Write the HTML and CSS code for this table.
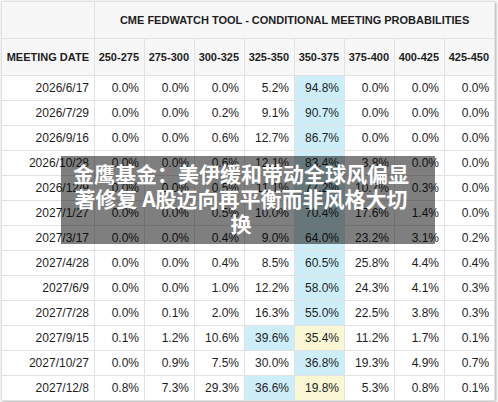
FILE: index.html
```html
<!DOCTYPE html>
<html>
<head>
<meta charset="utf-8">
<link rel="stylesheet" href="styles.css">
</head>
<body>
<div class="frame">
  <table class="fw">
    <colgroup>
      <col class="c-date"><col class="c-num"><col class="c-num"><col class="c-num"><col class="c-num"><col class="c-num"><col class="c-num"><col class="c-num"><col class="c-num">
    </colgroup>
    <thead>
      <tr class="title-row"><th></th><th colspan="8" class="title">CME FEDWATCH TOOL - CONDITIONAL MEETING PROBABILITIES</th></tr>
      <tr class="head-row"><th>MEETING DATE</th><th>250-275</th><th>275-300</th><th>300-325</th><th>325-350</th><th>350-375</th><th>375-400</th><th>400-425</th><th>425-450</th></tr>
    </thead>
    <tbody>
      <tr><td>2026/6/17</td><td>0.0%</td><td>0.0%</td><td>0.0%</td><td>5.2%</td><td class="b">94.8%</td><td>0.0%</td><td>0.0%</td><td>0.0%</td></tr>
      <tr><td>2026/7/29</td><td>0.0%</td><td>0.0%</td><td>0.2%</td><td>9.1%</td><td class="b">90.7%</td><td>0.0%</td><td>0.0%</td><td>0.0%</td></tr>
      <tr><td>2026/9/16</td><td>0.0%</td><td>0.0%</td><td>0.6%</td><td>12.7%</td><td class="b">86.7%</td><td>0.0%</td><td>0.0%</td><td>0.0%</td></tr>
      <tr><td>2026/10/28</td><td>0.0%</td><td>0.0%</td><td>0.6%</td><td>12.1%</td><td class="b">83.4%</td><td>3.8%</td><td>0.0%</td><td>0.0%</td></tr>
      <tr><td>2026/12/9</td><td>0.0%</td><td>0.0%</td><td>0.5%</td><td>11.1%</td><td class="b">77.2%</td><td>10.7%</td><td>0.3%</td><td>0.0%</td></tr>
      <tr><td>2027/1/27</td><td>0.0%</td><td>0.0%</td><td>0.5%</td><td>10.0%</td><td class="b">70.4%</td><td>17.6%</td><td>1.4%</td><td>0.0%</td></tr>
      <tr><td>2027/3/17</td><td>0.0%</td><td>0.0%</td><td>0.4%</td><td>9.0%</td><td class="b">64.0%</td><td>23.2%</td><td>3.1%</td><td>0.2%</td></tr>
      <tr><td>2027/4/28</td><td>0.0%</td><td>0.0%</td><td>0.4%</td><td>8.5%</td><td class="b">60.5%</td><td>25.8%</td><td>4.4%</td><td>0.4%</td></tr>
      <tr><td>2027/6/9</td><td>0.0%</td><td>0.0%</td><td>1.0%</td><td>12.2%</td><td class="b">58.0%</td><td>24.3%</td><td>4.1%</td><td>0.3%</td></tr>
      <tr><td>2027/7/28</td><td>0.0%</td><td>0.1%</td><td>2.0%</td><td>16.3%</td><td class="b">55.0%</td><td>22.5%</td><td>3.8%</td><td>0.3%</td></tr>
      <tr><td>2027/9/15</td><td>0.1%</td><td>1.2%</td><td>10.6%</td><td class="b">39.6%</td><td class="y">35.4%</td><td>11.2%</td><td>1.7%</td><td>0.1%</td></tr>
      <tr><td>2027/10/27</td><td>0.0%</td><td>0.9%</td><td>7.5%</td><td>30.0%</td><td class="b">36.8%</td><td>19.3%</td><td>4.9%</td><td>0.7%</td></tr>
      <tr><td>2027/12/8</td><td>0.8%</td><td>7.3%</td><td>29.3%</td><td class="b">36.6%</td><td class="y">19.8%</td><td>5.3%</td><td>0.8%</td><td>0.1%</td></tr>
    </tbody>
  </table>
  <div class="caption">金鹰基金：美伊缓和带动全球风偏显著修复 A股迈向再平衡而非风格大切换</div>
</div>
</body>
</html>
```

FILE: styles.css
```css
html, body {
  margin: 0;
  padding: 0;
  background: #ffffff;
}
body {
  width: 498px;
  height: 402px;
  overflow: hidden;
  font-family: "Liberation Sans", Arial, sans-serif;
  color: #1e1e1e;
}
.frame {
  position: relative;
  width: 498px;
  height: 402px;
  padding: 1px 0 0 1px;
  box-sizing: border-box;
}
.fw {
  border-collapse: collapse;
  table-layout: fixed;
  width: 494px;
  box-shadow: 1px 1px 3px rgba(0, 0, 0, 0.35);
}
.c-date { width: 93px; }
.c-num { width: 50px; }
.fw th, .fw td {
  border: 1px solid #e2e2e2;
  padding: 0 5px 0 0;
  text-align: right;
  white-space: nowrap;
  overflow: hidden;
}
.fw th {
  font-size: 11px;
  font-weight: bold;
  background: #f7f7f7;
}
.title-row th, .head-row th {
  height: 36px;
}
.fw th.title {
  text-align: center;
  padding: 0;
}
.fw td {
  font-size: 12px;
  height: 24px;
}
.fw td.b { background: #cdeef8; }
.fw td.y { background: #faf7d4; }
.caption {
  position: absolute;
  left: 61px;
  top: 156px;
  width: 374px;
  height: 88px;
  box-sizing: border-box;
  padding: 5px 24px 0 10px;
  background: rgba(0, 0, 0, 0.5);
  color: #ffffff;
  font-family: "Noto Sans CJK SC", sans-serif;
  font-weight: bold;
  font-size: 21px;
  line-height: 25px;
  text-align: center;
}
```
